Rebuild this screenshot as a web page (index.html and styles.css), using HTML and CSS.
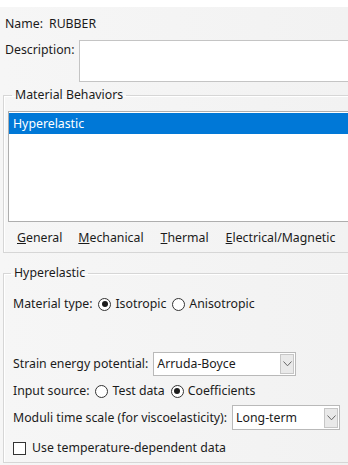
FILE: index.html
```html
<!DOCTYPE html>
<html lang="en">

<head>
    <meta charset="UTF-8">
    <meta name="viewport" content="width=device-width, initial-scale=1.0">
    <title>Edit Material</title>
    <link rel="stylesheet" href="styles.css">
</head>

<body>
    <div class="strip"></div>

    <div class="row name-row">
        <span>Name:</span>
        <span class="name-val">RUBBER</span>
    </div>

    <div class="desc-row">
        <label class="desc-label" for="desc">Description:</label>
        <div class="textbox" id="desc"></div>
    </div>

    <fieldset class="group behaviors">
        <legend>Material Behaviors</legend>
        <div class="listbox">
            <div class="item selected">Hyperelastic</div>
        </div>
        <div class="menubar">
            <span class="menu m-general"><u>G</u>eneral</span>
            <span class="menu m-mech"><u>M</u>echanical</span>
            <span class="menu m-therm"><u>T</u>hermal</span>
            <span class="menu m-elec"><u>E</u>lectrical/Magnetic</span>
        </div>
    </fieldset>

    <fieldset class="group hyper">
        <legend>Hyperelastic</legend>

        <div class="row type-row">
            <span>Material type:</span>
            <span class="radio checked"></span><span>Isotropic</span>
            <span class="radio"></span><span>Anisotropic</span>
        </div>

        <div class="row strain-row">
            <span>Strain energy potential:</span>
            <div class="combo combo-strain">
                <span class="combo-text">Arruda-Boyce</span>
                <span class="combo-btn">
                    <svg width="9" height="6" viewBox="0 0 9 6"><path d="M0.5 0.5 L4.5 4.8 L8.5 0.5" fill="none" stroke="#666" stroke-width="1"/></svg>
                </span>
            </div>
        </div>

        <div class="row source-row">
            <span>Input source:</span>
            <span class="radio"></span><span>Test data</span>
            <span class="radio checked"></span><span>Coefficients</span>
        </div>

        <div class="row moduli-row">
            <span>Moduli time scale (for viscoelasticity):</span>
            <div class="combo combo-moduli">
                <span class="combo-text">Long-term</span>
                <span class="combo-btn">
                    <svg width="9" height="6" viewBox="0 0 9 6"><path d="M0.5 0.5 L4.5 4.8 L8.5 0.5" fill="none" stroke="#666" stroke-width="1"/></svg>
                </span>
            </div>
        </div>

        <div class="row check-row">
            <span class="checkbox"></span>
            <span>Use temperature-dependent data</span>
        </div>
    </fieldset>
</body>

</html>
```

FILE: styles.css
```css
body {
    margin: 0;
    background: linear-gradient(to right, #f6f6f6, #f2f2f2);
    color: #1b1b1b;
    font-family: "Noto Sans", "DejaVu Sans", sans-serif;
    font-size: 12.3px;
    line-height: 16px;
    overflow: hidden;
    height: 465px;
}

.strip {
    height: 7px;
    background: #ffffff;
}

.row {
    display: flex;
    align-items: center;
    white-space: nowrap;
}

.name-row {
    margin-top: 9px;
    padding-left: 5px;
    height: 16px;
}

.name-val {
    margin-left: 6px;
}

.desc-row {
    display: flex;
    margin-top: 8px;
    padding-left: 5px;
}

.desc-label {
    width: 74px;
    padding-top: 2px;
}

.textbox {
    flex: 1;
    height: 40px;
    background: #ffffff;
    border: 1px solid #c4c4c4;
    border-right: 0;
}

.group {
    margin: 0 0 0 3px;
    border: 1px solid #d6d6d6;
    border-right: 0;
    box-shadow: inset 1px 1px 0 #ffffff;
}

.group legend {
    padding: 0 3px;
    line-height: 14px;
}

.behaviors {
    margin-top: 6px;
    padding: 9px 0 0 4px;
}

.behaviors legend {
    margin-left: 4px;
}

.listbox {
    height: 108px;
    background: #ffffff;
    border: 1px solid #aeaeae;
    border-right: 0;
    padding-top: 1px;
}

.item {
    height: 21px;
    line-height: 21px;
    padding-left: 4px;
}

.item.selected {
    background: #0078d7;
    color: #ffffff;
}

.menubar {
    display: flex;
    height: 29px;
    align-items: center;
    padding-top: 1px;
}

.menu {
    margin-left: 9px;
}

.m-mech {
    margin-left: 16px;
}

.m-therm {
    margin-left: 17px;
}

.m-elec {
    margin-left: 17px;
}

.hyper {
    margin-top: 13px;
    padding: 0 0 6px 9px;
}

.hyper legend {
    margin-left: -2px;
}

.type-row {
    margin-top: 16px;
}

.radio {
    width: 11px;
    height: 11px;
    border: 1px solid #333333;
    border-radius: 50%;
    background: #ffffff;
    margin: 0 4px 0 6px;
    position: relative;
    flex: none;
}

.radio.checked::after {
    content: "";
    position: absolute;
    left: 2.5px;
    top: 2.5px;
    width: 6px;
    height: 6px;
    border-radius: 50%;
    background: #1b1b1b;
}

.strain-row {
    margin-top: 40px;
}

.combo {
    display: flex;
    align-items: center;
    margin-left: 5px;
    background: #ffffff;
    border: 1px solid #b9b9b9;
    position: relative;
}

.combo-strain {
    width: 141px;
    height: 22px;
}

.combo-moduli {
    width: 106px;
    height: 23px;
}

.combo-text {
    padding-left: 3px;
    flex: 1;
}

.combo-btn {
    width: 12px;
    height: 18px;
    margin-right: 1px;
    background: #e9e9e9;
    border: 1px solid #c6c6c6;
    display: flex;
    align-items: center;
    justify-content: center;
}

.source-row {
    margin-top: 7px;
}

.moduli-row {
    margin-top: 6px;
}

.check-row {
    margin-top: 10px;
}

.checkbox {
    width: 11px;
    height: 11px;
    border: 1px solid #333333;
    background: #ffffff;
    margin-right: 6px;
    flex: none;
}
```
